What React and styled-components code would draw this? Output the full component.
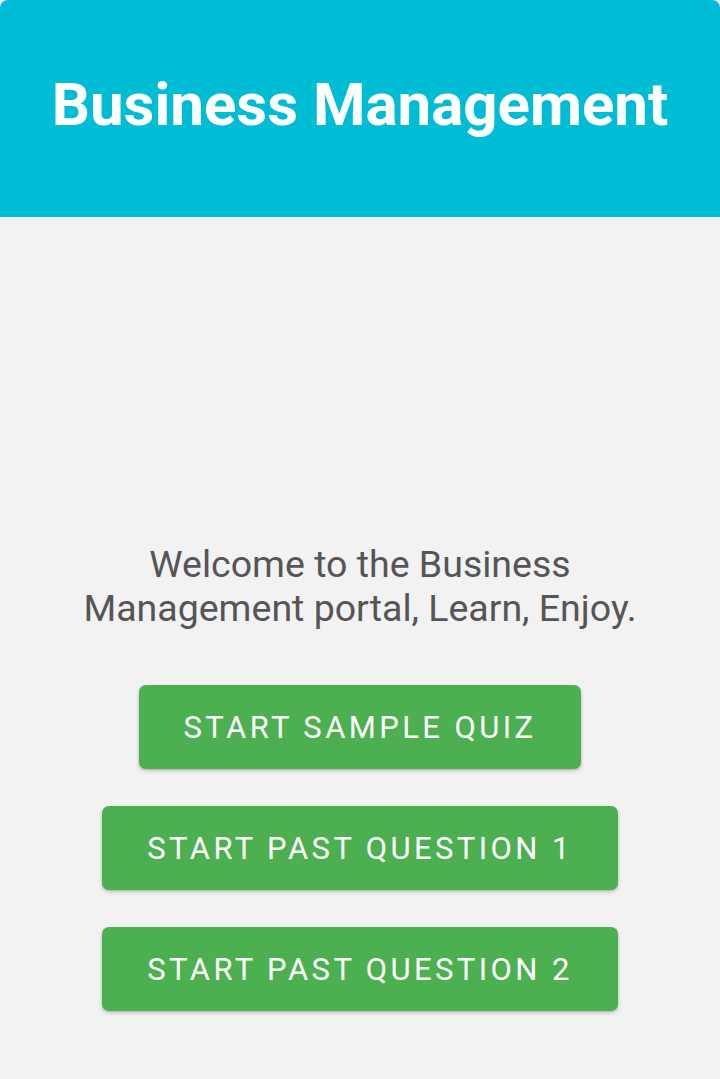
import React from 'react';
import styled, { createGlobalStyle } from 'styled-components';

const GlobalStyle = createGlobalStyle`
  html, body {
    margin: 0;
    padding: 0;
    background: #f2f2f2;
    font-family: Roboto, "Noto Sans", sans-serif;
  }
`;

const Page = styled.div`
  min-height: 1079px;
  display: flex;
  flex-direction: column;
`;

const Header = styled.header`
  height: 217px;
  background: #00bcd4;
  border-radius: 8px 8px 0 0;
  display: flex;
  align-items: center;
  justify-content: center;
`;

const Title = styled.h1`
  margin: 0;
  padding-bottom: 8px;
  color: #fff;
  font-size: 60px;
  font-weight: 700;
`;

const Body = styled.main`
  padding-top: 325px;
  display: flex;
  flex-direction: column;
  align-items: center;
`;

const Welcome = styled.p`
  margin: 0;
  text-align: center;
  color: #555;
  font-size: 37.5px;
  line-height: 44px;
`;

const Buttons = styled.div`
  margin-top: 55px;
  display: flex;
  flex-direction: column;
  align-items: center;
  gap: 37px;
`;

const Button = styled.button`
  height: 84px;
  padding: 0 45px;
  border: none;
  border-radius: 7px;
  background: #4caf50;
  color: #fff;
  font-family: Roboto, sans-serif;
  font-size: 31px;
  font-weight: 400;
  letter-spacing: 3.4px;
  text-transform: uppercase;
  box-shadow: 0 2px 4px rgba(0, 0, 0, 0.18), 0 1px 2px rgba(0, 0, 0, 0.12);
  cursor: pointer;
`;

const quizzes = ['Start Sample Quiz', 'Start Past Question 1', 'Start Past Question 2'];

const App = () => (
  <Page>
    <GlobalStyle />
    <Header>
      <Title>Business Management</Title>
    </Header>
    <Body>
      <Welcome>
        Welcome to the Business
        <br />
        Management portal, Learn, Enjoy.
      </Welcome>
      <Buttons>
        {quizzes.map((label) => (
          <Button key={label}>{label}</Button>
        ))}
      </Buttons>
    </Body>
  </Page>
);

export default App;
